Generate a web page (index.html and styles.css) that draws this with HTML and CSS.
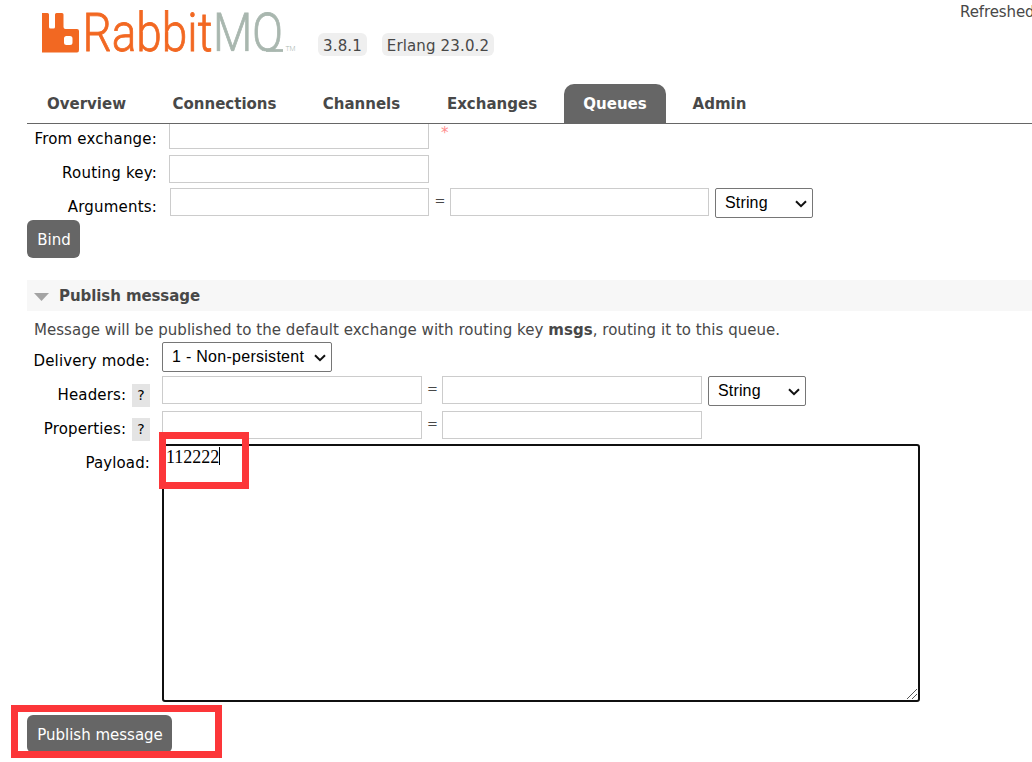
FILE: index.html
```html
<!DOCTYPE html>
<html lang="en">
<head>
<meta charset="utf-8">
<title>RabbitMQ Management</title>
<link rel="stylesheet" href="styles.css">
</head>
<body>
<header class="top">
  <svg class="logo" width="262" height="64" viewBox="0 0 262 64" role="img" aria-label="RabbitMQ">
    <path class="mark" fill-rule="evenodd" d="M2 13h5.500q1.500 0 1.500 1.500V27q0 1.500 1.500 1.500h3Q15 28.500 15 27V14.500Q15 13 16.500 13H22q1.500 0 1.500 1.500V27q0 2 2 2H37q2 0 2 2V50q0 2.500-2 2.500H2ZM26.500 36q-2.500 0-2.500 2.500v4q0 2.500 2.500 2.500h3.500q2.500 0 2.500-2.500v-4q0-2.500-2.500-2.500Z"/>
    <text class="word orange" x="42.500" y="51" textLength="130" lengthAdjust="spacingAndGlyphs">Rabbit</text>
    <g class="mq"><text class="word grey" x="173" y="51" textLength="70" lengthAdjust="spacingAndGlyphs">MQ</text></g>
    <path class="tail" d="M226 50.500H243"/>
    <text class="tm" x="245.500" y="51" textLength="10" lengthAdjust="spacingAndGlyphs">TM</text>
  </svg>
  <span class="badge v1">3.8.1</span>
  <span class="badge v2">Erlang 23.0.2</span>
  <span class="refreshed">Refreshed</span>
</header>
<nav class="tabs">
  <a class="t1">Overview</a><a class="t2">Connections</a><a class="t3">Channels</a><a class="t4">Exchanges</a><a class="t5 selected">Queues</a><a class="t6">Admin</a>
</nav>
<main>
  <section class="form bind">
    <div class="row from"><label>From exchange:</label><input class="field"><span class="star">*</span></div>
    <div class="row routing"><label>Routing key:</label><input class="field"></div>
    <div class="row args"><label>Arguments:</label><input class="field key"><span class="eq">=</span><input class="field value">
      <span class="pick"><select><option>String</option></select><svg width="14" height="10" viewBox="0 0 14 10"><path d="M2 2.200 7 7.200 12 2.200"/></svg></span></div>
    <button class="bindbtn">Bind</button>
  </section>
  <h2><svg width="15" height="8" viewBox="0 0 15 8"><path d="M0 0H15L7.500 8Z"/></svg><span>Publish message</span></h2>
  <p><span class="msg">Message will be published to the default exchange with routing key <b>msgs</b>, routing it to this queue.</span></p>
  <section class="form publish">
    <div class="row delivery"><label>Delivery mode:</label>
      <span class="pick wide"><select><option>1 - Non-persistent</option></select><svg width="14" height="10" viewBox="0 0 14 10"><path d="M2 2.200 7 7.200 12 2.200"/></svg></span></div>
    <div class="row headers"><label>Headers: <span class="help">?</span></label><input class="field"><span class="eq">=</span><input class="field">
      <span class="pick"><select><option>String</option></select><svg width="14" height="10" viewBox="0 0 14 10"><path d="M2 2.200 7 7.200 12 2.200"/></svg></span></div>
    <div class="row props"><label>Properties: <span class="help">?</span></label><input class="field"><span class="eq">=</span><input class="field"></div>
    <div class="row payload"><label>Payload:</label>
      <div class="area"><span class="typed">112222</span>
        <svg class="grip" width="12" height="12" viewBox="0 0 12 12"><path d="M1 11 11 1M6 11 11 6"/></svg>
        <div class="mark-payload"></div>
      </div></div>
    <div class="submit"><button>Publish message</button><div class="mark-submit"></div></div>
  </section>
</main>
</body>
</html>
```
FILE: styles.css
```css
* { box-sizing: border-box; }
body { margin: 0; height: 762px; overflow: hidden; background: #fff; color: #484848; font: 15px/20px "DejaVu Sans", Verdana, sans-serif; }
.top { display: flex; align-items: flex-start; height: 84px; padding-left: 40px; overflow: hidden; }
.logo { flex: none; overflow: visible; }
.mark, .orange { fill: #f26822; }
.orange { stroke: #f26822; stroke-width: .8; }
.grey { fill: #a9b7af; stroke: #a9b7af; stroke-width: .8; }
.mq { clip-path: polygon(0 0, 262px 0, 262px 52px, 0 52px); }
.tail { stroke: #a9b7af; stroke-width: 2.800; fill: none; }
.word { font: 300 54.500px Roboto, sans-serif; }
.tm { font: 300 8px Roboto, sans-serif; fill: #a9b7af; }
.badge { margin-top: 33px; height: 23px; line-height: 26px; border-radius: 6px; background: #efefef; text-align: center; white-space: nowrap; flex: none; letter-spacing: .15px; }
.v1 { width: 49px; margin-left: 16px; }
.v2 { width: 112px; margin-left: 15px; }
.refreshed { margin: 2px 0 0 466px; flex: none; letter-spacing: -.1px; }
.tabs { display: flex; height: 40px; margin-left: 27px; border-bottom: 1px solid #666; font-weight: bold; }
.tabs a { height: 39px; line-height: 40px; text-align: center; white-space: nowrap; flex: none; }
.t1 { width: 119px; }
.t2 { width: 157px; }
.t3 { width: 117px; }
.t4 { width: 144px; }
.t5 { width: 102px; }
.t6 { width: 107px; }
.tabs .selected { background: #666; color: #fff; border-radius: 10px 10px 0 0; }
main { padding-left: 27px; }
.row { display: flex; align-items: flex-start; }
label { color: #000; text-align: right; white-space: nowrap; flex: none; letter-spacing: .13px; }
.bind label { width: 130px; margin-right: 12px; letter-spacing: .2px; }
.publish label { width: 123px; margin-right: 12px; }
.field { width: 260px; height: 28px; border: 1px solid #ccc; border-radius: 0; background: #fff; padding: 4px; margin: 0; flex: none; }
.from { height: 31px; }
.from .field { height: 25px; border-top: 0; }
.from label { margin-top: 5px; }
.star { margin: -1px 0 0 12px; color: #ff8d8d; }
.routing { height: 33px; }
.routing label { margin-top: 8px; }
.args { height: 32px; }
.args label { margin-top: 9px; margin-right: 13px; }
.args .field { width: 259px; }
.eq { width: 20px; margin-top: 3px; padding-left: 1px; text-align: center; font-size: 13px; flex: none; }
.args .eq { width: 21px; }
.pick { position: relative; width: 98px; height: 30px; margin-left: 6px; flex: none; }
.pick select { appearance: none; display: block; width: 100%; height: 100%; padding: 0 0 2px 9px; border: 1px solid #767676; border-radius: 2px; background: #fff; color: #000; font: 16px "Liberation Sans", Arial, sans-serif; letter-spacing: .15px; }
.pick svg { position: absolute; right: 5px; top: 11px; fill: none; stroke: #111; stroke-width: 2; }
.wide { width: 170px; margin-left: 0; }
.wide select { letter-spacing: .28px; }
.publish .pick select { padding-bottom: 1px; }
button { display: block; height: 38px; padding: 1px 0 0 1px; border: 0; border-radius: 6px; background: #666; color: #fff; font: 15px "DejaVu Sans", Verdana, sans-serif; white-space: nowrap; }
.bindbtn { width: 53px; }
h2 { display: flex; align-items: center; height: 31px; margin: 22px 0 0; padding-left: 7px; background: #f7f7f7; font-size: 15px; letter-spacing: -.08px; }
h2 svg { margin: 2px 10px 0 0; fill: #a4a4a4; }
p { margin: 9px 0 2px; padding-left: 7px; height: 20px; white-space: nowrap; letter-spacing: .04px; }
.delivery { height: 34px; }
.delivery label, .headers label, .payload label { margin-top: 9px; }
.props label { margin-top: 8px; }
.headers { height: 35px; }
.props { height: 33px; }
.help { display: inline-block; width: 18px; height: 23px; margin: -2px 0 0 1px; line-height: 22px; background: #e4e4e4; text-align: center; font-size: 14px; }
.area { position: relative; width: 758px; height: 258px; border: 2px solid #101010; border-radius: 3px; padding: 1px 2px; color: #000; font: 18px/21px "Liberation Serif", serif; }
.typed { display: inline-block; height: 18px; line-height: 21px; border-right: 1px solid #000; }
.grip { position: absolute; right: 0; bottom: 0; fill: none; stroke: #555; stroke-width: 1; }
.mark-payload { position: absolute; left: -5px; top: -14px; width: 90px; height: 57px; border: 7px solid #fc3639; }
.submit { position: relative; margin-top: 13px; }
.submit button { width: 145px; }
.mark-submit { position: absolute; left: -16px; top: -10px; width: 211px; height: 53px; border: 7px solid #fc3639; }
```
